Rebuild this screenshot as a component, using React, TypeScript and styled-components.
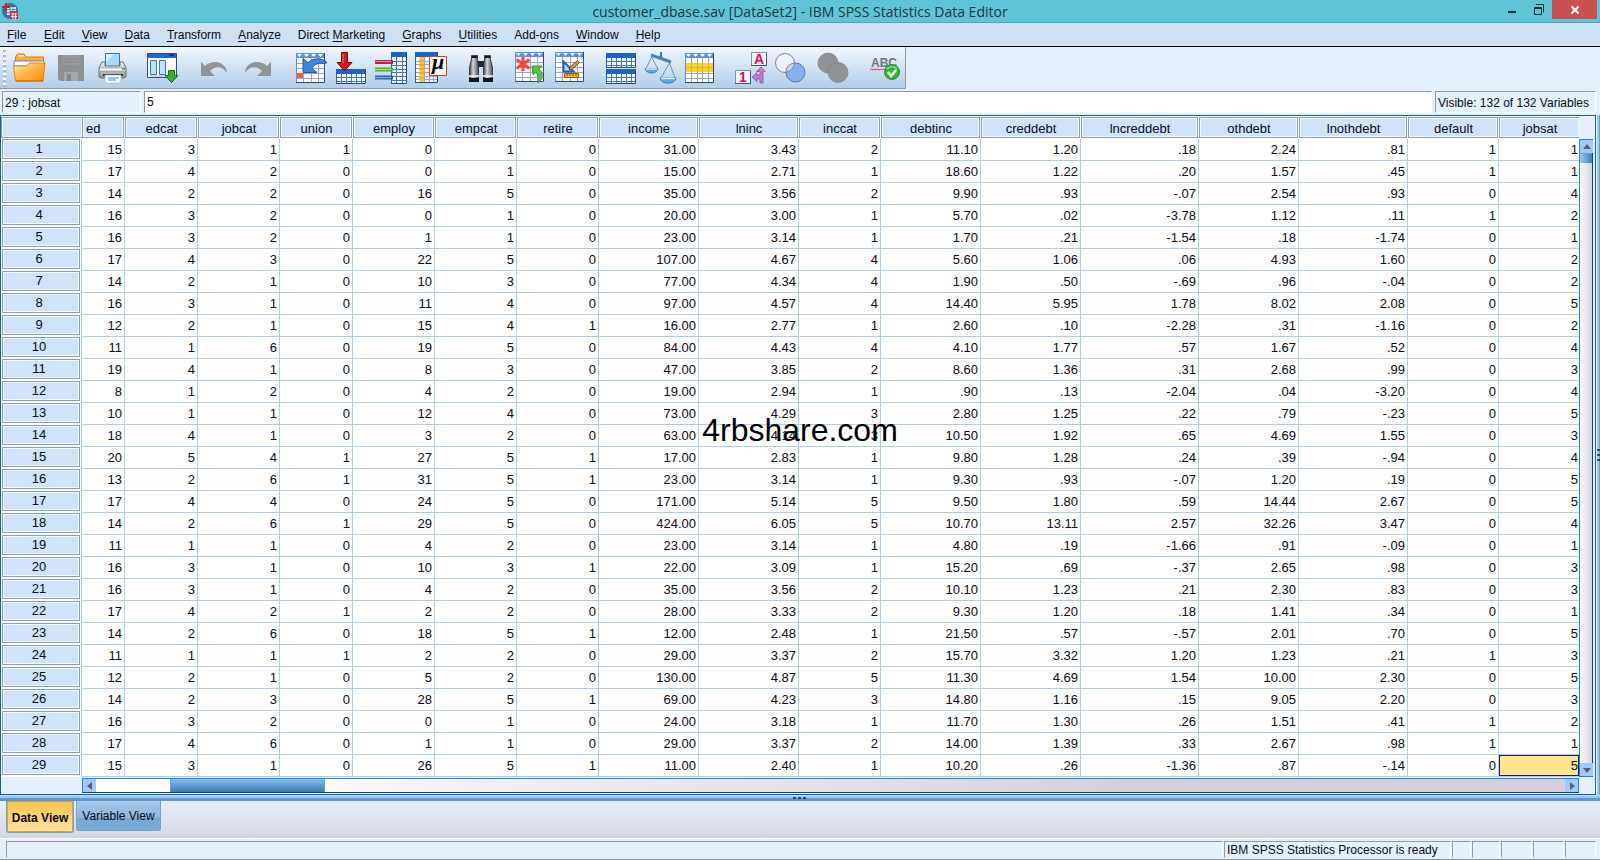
import React, { useState } from "react";
import styled, { createGlobalStyle, css } from "styled-components";

const Global = createGlobalStyle`
  * { box-sizing: border-box; }
  body {
    margin: 0;
    background: #e4f0fc;
    color: #0a0a14;
    font-family: "Liberation Sans", Arial, sans-serif;
    font-size: 12px;
    line-height: 16px;
  }
  button, input { font: inherit; color: inherit; }
`;

const Window = styled.div`
  display: flex;
  flex-direction: column;
  min-height: 100vh;
  overflow: hidden;
`;

/* ---------- title bar ---------- */

const TitleBar = styled.header`
  display: grid;
  grid-template-columns: 1fr auto 1fr;
  height: 23px;
  background: #60c4d7;
  border-bottom: 1px solid #4aa9b9;
`;

const AppLogo = styled.svg`
  margin: 3px 2px;
`;

const Title = styled.h1`
  margin: 0;
  font: 400 14px/24px "Open Sans", "Noto Sans", sans-serif;
  color: #1d363c;
`;

const Controls = styled.div`
  display: flex;
  justify-content: flex-end;
  padding-right: 3px;
`;

const ControlButton = styled.button<{ $close?: boolean }>`
  width: ${(p) => (p.$close ? 45 : 26)}px;
  height: 19px;
  padding: 0;
  border: 0;
  display: flex;
  align-items: center;
  justify-content: center;
  background: ${(p) => (p.$close ? "#c75050" : "transparent")};
`;

/* ---------- menu ---------- */

const MenuBar = styled.nav`
  display: flex;
  height: 24px;
  background: #cee1f2;
  border-bottom: 1px solid #000;
`;

const MenuButton = styled.button`
  min-width: 37px;
  padding: 1px 10px 0 7px;
  border: 0;
  background: none;
  line-height: 22px;
  text-align: left;
  white-space: nowrap;
  u { text-underline-offset: 2px; }
`;

/* ---------- tool bar ---------- */

const ToolRow = styled.div`
  display: flex;
  height: 44px;
  background: #e4f0fc;
`;

const ToolBar = styled.div`
  display: flex;
  gap: 11px;
  height: 42px;
  padding: 0 1px 0 3px;
  background: linear-gradient(#f2f7fd, #dbe8f6 35%, #b2cee9);
  border-right: 1px solid #929aa4;
  border-bottom: 1px solid #929aa4;
`;

const Grip = styled.div`
  width: 3px;
  margin: 1px -9px 1px 0;
  background: repeating-linear-gradient(#fff 0 2px, #a9b7c6 2px 4px, transparent 4px 5px);
`;

const ToolGroup = styled.div<{ $gap?: number }>`
  display: flex;
  gap: ${(p) => p.$gap ?? 0}px;
`;

const ToolButton = styled.button`
  width: 40px;
  height: 40px;
  padding: 0;
  border: 0;
  background: none;
  svg { display: block; }
`;

/* ---------- cell editor ---------- */

const EditorRow = styled.div`
  display: flex;
  gap: 3px;
  height: 24px;
  padding: 0 4px 2px 2px;
`;

const sunken = css`
  border: 1px solid;
  border-color: #929aa4 #fff #fff #929aa4;
`;

const CellName = styled.label`
  ${sunken}
  width: 139px;
  padding-left: 2px;
  line-height: 22px;
`;

const CellInput = styled.input`
  ${sunken}
  flex: 1;
  min-width: 0;
  padding: 0 2px;
  background: #fff;
  outline: 0;
`;

const VisibleInfo = styled.output`
  ${sunken}
  width: 161px;
  padding-left: 2px;
  line-height: 22px;
  white-space: nowrap;
`;

/* ---------- data grid ---------- */

const Workspace = styled.main`
  display: flex;
  flex: 1;
`;

const DataPane = styled.section`
  position: relative;
  display: grid;
  grid-template-columns: minmax(0, 1fr) 15px;
  grid-template-rows: 1fr 15px;
  flex: 1;
  min-width: 0;
  padding: 0 1px 1px 0;
  border: 1px solid #0b63ac;
`;

const Sheet = styled.table`
  width: 100%;
  height: fit-content;
  table-layout: fixed;
  border-collapse: separate;
  border-spacing: 0;
  font-size: 13px;
  background: #fff;
`;

const HeadCell = styled.th<{ $cut?: boolean; $last?: boolean }>`
  height: 23px;
  padding: 1px ${(p) => (p.$last ? 0 : 1)}px 1px 0;
  font-weight: 400;
  overflow: hidden;
  div {
    height: 21px;
    padding-left: ${(p) => (p.$cut ? 3 : 1)}px;
    border: 1px solid #8d9db2;
    border-right-width: ${(p) => (p.$last ? 0 : 1)}px;
    box-shadow: inset 0 0 0 1px #f2f8ff;
    background: #cfe3fc;
    line-height: 21px;
    text-align: ${(p) => (p.$cut ? "left" : "center")};
  }
`;

const RowHead = styled.th`
  height: 22px;
  padding: 0 1px 2px;
  font-weight: 400;
  border-right: 1px solid #b0cdec;
  div {
    height: 20px;
    padding-right: 4px;
    border: 1px solid #8d9db2;
    box-shadow: inset 0 0 0 1px #f2f8ff;
    background: #cfe3fc;
    line-height: 18px;
    text-align: center;
  }
`;

const Cell = styled.td<{ $selected?: boolean }>`
  height: 22px;
  padding: 0 2px 0 0;
  border-right: 1px solid #b0cdec;
  border-bottom: 1px solid #b0cdec;
  line-height: 20px;
  text-align: right;
  &:last-child { border-right: 0; padding-right: 1px; }
  ${(p) =>
    p.$selected &&
    css`
      background: #ffe48c;
      box-shadow: inset 0 0 0 1px #10109a;
    `}
`;

const Watermark = styled.p`
  position: absolute;
  left: 4px;
  right: 0;
  top: 296px;
  margin: 0;
  font-size: 32px;
  line-height: 36px;
  text-align: center;
  color: #000;
  pointer-events: none;
`;

/* ---------- scroll bars ---------- */

const VScroll = styled.div`
  display: flex;
  flex-direction: column;
  margin: 23px 1px 1px 0;
  border: 1px solid #1e8ae6;
  border-right-color: #0d4674;
  background: linear-gradient(90deg, #fbfbfc, #d3d3de);
`;

const HScroll = styled.div`
  display: flex;
  margin-left: 81px;
  border: 1px solid #1e8ae6;
  border-bottom: 1px solid #0d4674;
  background: linear-gradient(90deg, #ffffff 10%, #f2f2f4 25%, #d3d0dc 70%);
`;

const ScrollArrow = styled.button`
  flex: none;
  display: flex;
  align-items: center;
  justify-content: center;
  width: 13px;
  height: 13px;
  padding: 0;
  border: 0;
  background: #9fcbfb;
`;

const Thumb = styled.div<{ $vertical?: boolean }>`
  flex: none;
  ${(p) =>
    p.$vertical
      ? css`
          height: 10px;
          border-top: 1px solid #58a6ee;
          background: linear-gradient(90deg, #9cc6ec, #3b82bd);
        `
      : css`
          width: 155px;
          margin-left: 74px;
          background: linear-gradient(#8fbde6, #347ab6);
          border: solid #58a6ee;
          border-width: 0 1px;
        `}
`;

const Track = styled.div`
  flex: 1;
`;

const SideSplitter = styled.div`
  display: flex;
  align-items: center;
  width: 4px;
  border-left: 1px solid #fff;
  background: linear-gradient(90deg, #97cbf8 2px, #6a9fd2 2px);
`;

const BottomSplitter = styled.div`
  display: flex;
  justify-content: center;
  height: 6px;
  background: linear-gradient(#b4dcfa 1px, #97cbf8 1px 3px, #6496c8 3px);
`;

/* ---------- view tabs and status bar ---------- */

const ViewTabs = styled.div`
  display: flex;
  align-items: flex-start;
  gap: 2px;
  height: 37px;
  padding-left: 6px;
  background: linear-gradient(#e4eefa, #d6d6e2);
`;

const ViewTab = styled.button<{ $active: boolean }>`
  border: 1px solid #6ba3d3;
  border-top: 0;
  border-radius: 0 0 3px 3px;
  ${(p) =>
    p.$active
      ? css`
          width: 68px;
          height: 32px;
          padding: 2px 0 0;
          font-weight: 700;
          background: linear-gradient(#fbc24a, #fde3a2);
          box-shadow: inset 0 0 0 1px #d8a23e;
        `
      : css`
          width: 85px;
          height: 30px;
          padding: 0;
          background: linear-gradient(#a5c8e9, #8ab6de 60%, #74a8d6 60%, #7aacd8);
        `}
`;

const StatusBar = styled.footer`
  display: flex;
  gap: 1px;
  height: 22px;
  padding: 2px 4px 1px 6px;
  border-top: 1px solid #fff;
  border-bottom: 1px solid #929aa4;
`;

const StatusField = styled.div<{ $width?: number }>`
  border: 1px solid;
  border-color: #929aa4 #fff transparent #929aa4;
  padding-left: 2px;
  line-height: 17px;
  white-space: nowrap;
  ${(p) => (p.$width ? `width: ${p.$width}px;` : "flex: 1;")}
`;

/* ---------- icons ---------- */

type GridProps = { x: number; y: number; w: number; h: number; cols: number; rows: number; head?: string; line?: string; headH?: number };

/* A small spreadsheet with a coloured header strip. */
function Grid({ x, y, w, h, cols, rows, head = "#5b8fe8", line = "#9ba6b8", headH = 5 }: GridProps) {
  const bodyH = h - headH;
  const parts: React.ReactNode[] = [];
  for (let i = 1; i < cols; i++) {
    const cx = Math.round(x + (w * i) / cols) + 0.5;
    parts.push(<path key={"c" + i} d={`M${cx} ${y + headH}V${y + h}`} />);
  }
  for (let i = 1; i < rows; i++) {
    const cy = Math.round(y + headH + (bodyH * i) / rows) + 0.5;
    parts.push(<path key={"r" + i} d={`M${x} ${cy}H${x + w}`} />);
  }
  return (
    <g>
      <rect x={x} y={y} width={w} height={h} fill="#fafbfe" />
      <g stroke={line} strokeWidth="1">{parts}</g>
      <rect x={x} y={y} width={w} height={headH} fill={head} />
      <path d={`M${x + 0.5} ${y + h - 0.5}V${y + 0.5}`} stroke={head} />
      <path d={`M${x} ${y + h - 0.5}H${x + w - 0.5}V${y}`} stroke="#31486f" fill="none" />
    </g>
  );
}

function HeadArrows({ x, y }: { x: number; y: number }) {
  return (
    <g fill="#fff">
      {[0, 7, 14, 21].map((d) => (
        <path key={d} d={`M${x + d + 2} ${y + 1}h5l-2.5 3z`} />
      ))}
    </g>
  );
}

function Icon({ children }: { children: React.ReactNode }) {
  return (
    <svg width="40" height="40" viewBox="0 0 40 40" fill="none" aria-hidden="true">
      {children}
    </svg>
  );
}

const OpenIcon = () => (
  <Icon>
    <defs>
      <linearGradient id="fo" x1="0" y1="0" x2="1" y2="1">
        <stop offset="0" stopColor="#fff0b8" /><stop offset=".45" stopColor="#ffb648" /><stop offset="1" stopColor="#f58a12" />
      </linearGradient>
    </defs>
    <path d="M7.500 31V10l2-3H16l2 3h17.500v21z" fill="#fbb12d" stroke="#d77f0a" />
    <path d="M9 9.500l1-1.500h5.500l1 1.500z" fill="#fff0b8" />
    <path d="M6 14h30v5H6z" fill="#f4f9ff" stroke="#3f7fd0" strokeWidth=".8" />
    <path d="M5.500 19h13l3-3h15.500l-2 18H7.500z" fill="url(#fo)" stroke="#e08312" />
    <path d="M8 34h27" stroke="#c66a00" />
  </Icon>
);

const SaveIcon = () => (
  <Icon>
    <path d="M8 8h26v26H10l-2-2z" fill="#8f9092" />
    <path d="M13 8h16v10H13z" fill="#989a9d" /><path d="M14 12h14M14 15h14" stroke="#85878a" />
    <path d="M14 25h14v9H14z" fill="#a6a9ac" /><path d="M17 27h4v7h-4z" fill="#85878a" />
  </Icon>
);

const PrintIcon = () => (
  <Icon>
    <defs>
      <linearGradient id="pr" x1="0" y1="0" x2="0" y2="1">
        <stop offset="0" stopColor="#f5f6f7" /><stop offset="1" stopColor="#8b9096" />
      </linearGradient>
    </defs>
    <path d="M13.500 6.500h14v13h-14z" fill="#a8dafc" stroke="#2b79c2" />
    <path d="M14 7h8l-8 8z" fill="#dff2ff" />
    <path d="M10 15h3v4h15v-4h3l3 6v9l-2 1H9l-2-1v-9z" fill="url(#pr)" stroke="#6c7177" />
    <path d="M7.500 21h26v3h-26z" fill="#f7f8f9" stroke="#85898f" strokeWidth=".6" />
    <path d="M30 21h3v2h-3z" fill="#32d044" />
    <path d="M11 28h20" stroke="#33373d" strokeWidth="2" />
    <path d="M13 28h16v8H13z" fill="#fff" stroke="#a3afbd" strokeWidth=".7" />
    <path d="M16 31h11M16 33h8" stroke="#4785c8" />
  </Icon>
);

const RecallIcon = () => (
  <Icon>
    <path d="M4.500 6.500h29v24h-29z" fill="#fff" stroke="#2c4b91" />
    <path d="M5 7h28v4H5z" fill="#2168cf" /><path d="M26 8h5" stroke="#15377c" strokeWidth="2" />
    <path d="M7.500 13.500h6v14h-6zM16.500 13.500h6v14h-6z" fill="#bfe2fb" stroke="#2b78cc" />
    <path d="M7 29h15" stroke="#8cb0e0" />
    <path d="M25.500 23.500h6v5h3.500l-6.500 7-6.500-7h3.500z" fill="#37b02a" stroke="#15730f" />
  </Icon>
);

const curl = "M7 15l4 4c6-6 19-6 22 5l-1 1c-4-6-11-6-16-1l5 5H7z";
const UndoIcon = () => <Icon><path d={curl} fill="#929497" /></Icon>;
const RedoIcon = () => <Icon><g transform="translate(40 0) scale(-1 1)"><path d={curl} fill="#929497" /></g></Icon>;

const GotoCaseIcon = () => (
  <Icon>
    <Grid x={7} y={6} w={29} h={30} cols={4} rows={5} />
    <HeadArrows x={6} y={6} />
    <path d="M8 26h6v5H8z" fill="#fb5548" />
    <path d="M14 11.500v14h14l-5-4c2-5 8-6 13-5l2-1c-5-5-13-5-19 0z" fill="#3d86df" stroke="#1b4fa8" strokeWidth=".9" />
  </Icon>
);

const GotoVariableIcon = () => (
  <Icon>
    <Grid x={7} y={22} w={30} h={15} cols={6} rows={3} head="#1d63c9" line="#3f76c8" />
    <path d="M12.500 5.500h6v10h4.500l-7.500 8.500-7.500-8.500h4.500z" fill="#cf1c1c" stroke="#7d0a0a" />
    <path d="M14 7v9" stroke="#f07a70" />
  </Icon>
);

const VariablesIcon = () => (
  <Icon>
    <Grid x={22} y={5} w={16} h={32} cols={3} rows={7} head="#1d63c9" line="#3f76c8" />
    <path d="M6 15h18" stroke="#c21f50" strokeWidth="4" /><path d="M6 14.500h16" stroke="#ef7f9d" />
    <path d="M6 22.500h18" stroke="#45b52d" strokeWidth="4" /><path d="M6 22.500h16" stroke="#a5f07c" />
    <path d="M6 30.500h18" stroke="#2f5fc4" strokeWidth="4" /><path d="M6 30.500h16" stroke="#87aef2" />
  </Icon>
);

const StatsIcon = () => (
  <Icon>
    <Grid x={6} y={5} w={23} h={31} cols={5} rows={7} head="#1d63c9" />
    <path d="M10.500 10h4.500v25h-4.500z" fill="#fcc443" />
    <path d="M10 14h5M10 18h5M10 22h5M10 26h5M10 31h5" stroke="#d8942a" />
    <path d="M20.500 9.500h17v19h-17z" fill="#fff" stroke="#ef3a17" />
    <text x="23" y="22" fontFamily="Liberation Serif, serif" fontSize="22" fontWeight="700" fontStyle="italic" fill="#000">μ</text>
  </Icon>
);

const FindIcon = () => (
  <Icon>
    <defs>
      <linearGradient id="bi">
        <stop offset="0" stopColor="#3e4248" /><stop offset=".4" stopColor="#d4d8dd" /><stop offset="1" stopColor="#4c5057" />
      </linearGradient>
    </defs>
    <path d="M17 14h7v6h-7z" fill="#24262a" />
    <path d="M11.500 8.500h6v4l1 7v15h-9V20l2-8z" fill="url(#bi)" stroke="#222428" strokeWidth=".8" />
    <path d="M24.500 8.500h6v4l2 8v14h-9v-15l1-7z" fill="url(#bi)" stroke="#222428" strokeWidth=".8" />
    <path d="M9 29h10M23 29h10" stroke="#f4f5f7" strokeWidth="1.500" />
    <path d="M9 31h10v4H9zM23 31h10v4H23z" fill="#131416" />
    <path d="M12 10h5M25 10h5" stroke="#16181b" strokeWidth="2" />
  </Icon>
);

const InsertCaseIcon = () => (
  <Icon>
    <Grid x={4} y={5} w={29} h={30} cols={4} rows={5} />
    <HeadArrows x={3} y={5} />
    <path d="M12 10v14M5.500 12.500l13 9M5.500 21.500l13-9" stroke="#f8463c" strokeWidth="3" />
    <path d="M21 19h10l-3 3c5 4 4 10-1 14 1-5 0-8-2-11l-3 3z" fill="#58c33d" stroke="#2f8f1c" strokeWidth=".8" />
  </Icon>
);

const InsertVariableIcon = () => (
  <Icon>
    <Grid x={4} y={5} w={29} h={30} cols={4} rows={5} />
    <HeadArrows x={3} y={5} />
    <path d="M12.500 14.500l10 10h-10z" fill="#b9dbfb" stroke="#1f5fc0" strokeWidth="2" />
    <path d="M18 23l1.500-3.500 7-6 2 2-7 6.500z" fill="#d9933a" stroke="#553311" strokeWidth=".8" />
    <path d="M13.500 26.500h14v4h-14z" fill="#f7b62d" stroke="#9a5608" />
    <path d="M16 27v2M19 27v2M22 27v2M25 27v2" stroke="#7c4506" />
  </Icon>
);

const SplitIcon = () => (
  <Icon>
    <Grid x={4} y={6} w={30} h={15} cols={6} rows={3} head="#1d63c9" line="#3f76c8" />
    <Grid x={4} y={22} w={30} h={15} cols={6} rows={3} head="#1d63c9" line="#3f76c8" />
  </Icon>
);

const WeightIcon = () => (
  <Icon>
    <path d="M19 5v6" stroke="#39719f" strokeWidth="2" />
    <path d="M9 8l20 7" stroke="#4685b3" strokeWidth="3" />
    <path d="M9.500 10L4 22M9.500 10L16 22M27.500 16L19 31M27.500 16L33 31" stroke="#6b93b4" />
    <path d="M3 21.500h13c-1 6-12 6-13 0zM18 31h16c-1 7-15 7-16 0z" fill="#5aa9dd" stroke="#34759f" strokeWidth=".8" />
    <path d="M4 22h11M19 31.500h14" stroke="#d5eefb" strokeWidth="1.500" />
  </Icon>
);

const SelectIcon = () => (
  <Icon>
    <Grid x={3} y={6} w={29} h={30} cols={5} rows={5} />
    <HeadArrows x={2} y={6} />
    <path d="M4 16h27v9H4z" fill="#f9d22d" />
    <path d="M4 20.500h27M9.500 16v9M15.500 16v9M20.500 16v9M26.500 16v9" stroke="#e0b527" />
  </Icon>
);

const ValueLabelsIcon = () => (
  <Icon>
    <path d="M18.500 5.500h15v13h-15zM2.500 23.500h15v13h-15z" fill="#f4f7fb" stroke="#7d94ad" />
    <path d="M18 18.500h15.500V6M2 36.500h15.500V24" stroke="#3c5878" />
    <g fontFamily="Liberation Sans, sans-serif" fontWeight="700" fontSize="14" fill="#dc0d50" textAnchor="middle">
      <text x="26" y="17">A</text>
      <text x="10" y="35">1</text>
    </g>
    <path d="M28 20l4.500 4.500H30V36h-3v-4h-3v2.500L19 30l5-4.500V28h3v-3.500h-3.500z" fill="#c07bcf" stroke="#8d4fa0" strokeWidth=".8" />
  </Icon>
);

const UseSetsIcon = () => (
  <Icon>
    <circle cx="12" cy="16" r="9.500" fill="#f1f5fb" fillOpacity=".8" stroke="#7d848e" />
    <circle cx="22.500" cy="25.500" r="9.500" fill="#78a9f2" fillOpacity=".85" stroke="#5873a8" />
    <path d="M13 25a9.500 9.500 0 0 1 8.500-9A9.500 9.500 0 0 1 13 25z" fill="#c4d7ee" stroke="#76808e" strokeWidth=".8" />
  </Icon>
);

const ShowAllIcon = () => (
  <Icon>
    <g fill="#909296" stroke="#85878b" strokeWidth=".8">
      <circle cx="15" cy="16" r="10" />
      <circle cx="25" cy="25.500" r="10" />
    </g>
    <path d="M15 25a9.500 9.500 0 0 1 10-9.500" stroke="#84868a" />
  </Icon>
);

const SpellIcon = () => (
  <Icon>
    <text x="7" y="20" fontFamily="Liberation Sans, sans-serif" fontWeight="700" fontSize="12" fill="#70757c">ABC</text>
    <path d="M6 23l1.500-1 1.500 1 1.500-1 1.500 1 1.500-1 1.500 1 1.500-1 1.500 1 1.500-1 1.500 1" stroke="#e03b24" />
    <circle cx="28" cy="25" r="7.500" fill="#35b235" stroke="#2a8d2c" />
    <path d="M23 22a6 5 0 0 1 10 0" stroke="#8fe08b" strokeWidth="1.500" />
    <path d="M24 25l3 4 5-6" stroke="#fff" strokeWidth="2.500" />
  </Icon>
);

type Tool = [string, () => React.ReactElement];
const toolGroups: { gap?: number; tools: Tool[] }[] = [
  { gap: 2, tools: [["Open", OpenIcon], ["Save", SaveIcon], ["Print", PrintIcon]] },
  { tools: [["Recall dialogs", RecallIcon]] },
  { gap: 4, tools: [["Undo", UndoIcon], ["Redo", RedoIcon]] },
  { tools: [["Go to case", GotoCaseIcon], ["Go to variable", GotoVariableIcon], ["Variables", VariablesIcon], ["Run statistics", StatsIcon]] },
  { tools: [["Find", FindIcon]] },
  { tools: [["Insert cases", InsertCaseIcon], ["Insert variable", InsertVariableIcon]] },
  { tools: [["Split file", SplitIcon], ["Weight cases", WeightIcon], ["Select cases", SelectIcon]] },
  { tools: [["Value labels", ValueLabelsIcon], ["Use variable sets", UseSetsIcon], ["Show all variables", ShowAllIcon]] },
  { tools: [["Spell check", SpellIcon]] },
];

/* "_" precedes the mnemonic letter. */
const menus = ["_File", "_Edit", "_View", "_Data", "_Transform", "_Analyze", "Direct _Marketing", "_Graphs", "_Utilities", "Add-_ons", "_Window", "_Help"];

const columns: [string, number | undefined][] = [
  ["ed", 43], ["edcat", 73], ["jobcat", 82], ["union", 73], ["employ", 82], ["empcat", 82], ["retire", 82],
  ["income", 100], ["lninc", 100], ["inccat", 82], ["debtinc", 100], ["creddebt", 100], ["lncreddebt", 118],
  ["othdebt", 100], ["lnothdebt", 109], ["default", 91], ["jobsat", undefined],
];

const data = `15 3 1 1 0 1 0 31.00 3.43 2 11.10 1.20 .18 2.24 .81 1 1
17 4 2 0 0 1 0 15.00 2.71 1 18.60 1.22 .20 1.57 .45 1 1
14 2 2 0 16 5 0 35.00 3.56 2 9.90 .93 -.07 2.54 .93 0 4
16 3 2 0 0 1 0 20.00 3.00 1 5.70 .02 -3.78 1.12 .11 1 2
16 3 2 0 1 1 0 23.00 3.14 1 1.70 .21 -1.54 .18 -1.74 0 1
17 4 3 0 22 5 0 107.00 4.67 4 5.60 1.06 .06 4.93 1.60 0 2
14 2 1 0 10 3 0 77.00 4.34 4 1.90 .50 -.69 .96 -.04 0 2
16 3 1 0 11 4 0 97.00 4.57 4 14.40 5.95 1.78 8.02 2.08 0 5
12 2 1 0 15 4 1 16.00 2.77 1 2.60 .10 -2.28 .31 -1.16 0 2
11 1 6 0 19 5 0 84.00 4.43 4 4.10 1.77 .57 1.67 .52 0 4
19 4 1 0 8 3 0 47.00 3.85 2 8.60 1.36 .31 2.68 .99 0 3
8 1 2 0 4 2 0 19.00 2.94 1 .90 .13 -2.04 .04 -3.20 0 4
10 1 1 0 12 4 0 73.00 4.29 3 2.80 1.25 .22 .79 -.23 0 5
18 4 1 0 3 2 0 63.00 4.14 3 10.50 1.92 .65 4.69 1.55 0 3
20 5 4 1 27 5 1 17.00 2.83 1 9.80 1.28 .24 .39 -.94 0 4
13 2 6 1 31 5 1 23.00 3.14 1 9.30 .93 -.07 1.20 .19 0 5
17 4 4 0 24 5 0 171.00 5.14 5 9.50 1.80 .59 14.44 2.67 0 5
14 2 6 1 29 5 0 424.00 6.05 5 10.70 13.11 2.57 32.26 3.47 0 4
11 1 1 0 4 2 0 23.00 3.14 1 4.80 .19 -1.66 .91 -.09 0 1
16 3 1 0 10 3 1 22.00 3.09 1 15.20 .69 -.37 2.65 .98 0 3
16 3 1 0 4 2 0 35.00 3.56 2 10.10 1.23 .21 2.30 .83 0 3
17 4 2 1 2 2 0 28.00 3.33 2 9.30 1.20 .18 1.41 .34 0 1
14 2 6 0 18 5 1 12.00 2.48 1 21.50 .57 -.57 2.01 .70 0 5
11 1 1 1 2 2 0 29.00 3.37 2 15.70 3.32 1.20 1.23 .21 1 3
12 2 1 0 5 2 0 130.00 4.87 5 11.30 4.69 1.54 10.00 2.30 0 5
14 2 3 0 28 5 1 69.00 4.23 3 14.80 1.16 .15 9.05 2.20 0 3
16 3 2 0 0 1 0 24.00 3.18 1 11.70 1.30 .26 1.51 .41 1 2
17 4 6 0 1 1 0 29.00 3.37 2 14.00 1.39 .33 2.67 .98 1 1
15 3 1 0 26 5 1 11.00 2.40 1 10.20 .26 -1.36 .87 -.14 0 5`
  .split("\n")
  .map((row) => row.split(" "));

function MenuLabel({ text }: { text: string }) {
  const [before, after] = text.split("_");
  return <>{before}<u>{after[0]}</u>{after.slice(1)}</>;
}

const arrowPaths = { up: "M0 6h8L4 1z", down: "M0 2h8L4 7z", left: "M6 0v8L1 4z", right: "M2 0v8l5-4z" };

function Arrow({ dir }: { dir: keyof typeof arrowPaths }) {
  return (
    <ScrollArrow aria-label={`Scroll ${dir}`}>
      <svg width="8" height="8"><path d={arrowPaths[dir]} fill="#59606a" /></svg>
    </ScrollArrow>
  );
}

export default function App() {
  const [value, setValue] = useState("5");
  const [view, setView] = useState("Data View");

  return (
    <Window>
      <Global />
      <TitleBar>
        <AppLogo width="16" height="16" viewBox="0 0 16 16" aria-hidden="true">
          <circle cx="8" cy="8" r="8" fill="#3c6fae" />
          <path d="M5 4h9v8H5z" fill="#dceafa" />
          <path d="M5 6.500h9M5 9.500h9M8 4v8M11 4v8" stroke="#5f8fc9" />
          <path d="M4 0v8M0 4h8" stroke="#d81a2c" strokeWidth="2" />
          <path d="M8 8h8v8H8z" fill="#c9354a" />
          <path d="M9 11h6M9 13.500h6M11 10v6M13.500 10v6" stroke="#fbe3e6" />
        </AppLogo>
        <Title>customer_dbase.sav [DataSet2] - IBM SPSS Statistics Data Editor</Title>
        <Controls>
          <ControlButton aria-label="Minimize">
            <svg width="12" height="12"><path d="M1 8h8" stroke="#1c2b2f" strokeWidth="2" /></svg>
          </ControlButton>
          <ControlButton aria-label="Restore">
            <svg width="12" height="12" fill="none" stroke="#1c2b2f">
              <path d="M1.500 3.500h7v7h-7zM1 4.500h8M3 0.500h7.500v8" />
            </svg>
          </ControlButton>
          <ControlButton aria-label="Close" $close>
            <svg width="10" height="10"><path d="M1.500 1.500l7 7M8.500 1.500l-7 7" stroke="#fff" strokeWidth="2" /></svg>
          </ControlButton>
        </Controls>
      </TitleBar>

      <MenuBar>
        {menus.map((m) => (
          <MenuButton key={m}><MenuLabel text={m} /></MenuButton>
        ))}
      </MenuBar>

      <ToolRow>
        <ToolBar role="toolbar">
          <Grip />
          {toolGroups.map((g, i) => (
            <ToolGroup key={i} $gap={g.gap}>
              {g.tools.map(([name, Glyph]) => (
                <ToolButton key={name} aria-label={name}><Glyph /></ToolButton>
              ))}
            </ToolGroup>
          ))}
        </ToolBar>
      </ToolRow>

      <EditorRow>
        <CellName htmlFor="cell-value">29 : jobsat</CellName>
        <CellInput id="cell-value" value={value} onChange={(e) => setValue(e.target.value)} />
        <VisibleInfo>Visible: 132 of 132 Variables</VisibleInfo>
      </EditorRow>

      <Workspace>
        <DataPane>
          <Sheet>
            <colgroup>
              <col width={81} />
              {columns.map(([name, width]) => <col key={name} width={width} />)}
            </colgroup>
            <thead>
              <tr>
                <HeadCell $last><div /></HeadCell>
                {columns.map(([name], i) => (
                  <HeadCell key={name} scope="col" $cut={i === 0} $last={i === columns.length - 1}>
                    <div>{name}</div>
                  </HeadCell>
                ))}
              </tr>
            </thead>
            <tbody>
              {data.map((row, r) => (
                <tr key={r}>
                  <RowHead scope="row"><div>{r + 1}</div></RowHead>
                  {row.map((v, c) => {
                    const selected = r === 28 && c === 16;
                    return <Cell key={c} $selected={selected}>{selected ? value : v}</Cell>;
                  })}
                </tr>
              ))}
            </tbody>
          </Sheet>
          <VScroll>
            <Arrow dir="up" />
            <Thumb $vertical />
            <Track />
            <Arrow dir="down" />
          </VScroll>
          <HScroll>
            <Arrow dir="left" />
            <Thumb />
            <Track />
            <Arrow dir="right" />
          </HScroll>
          <Watermark>4rbshare.com</Watermark>
        </DataPane>
        <SideSplitter>
          <svg width="4" height="14" fill="#1c4a80"><path d="M0 1h3v2H0zM0 6h3v2H0zM0 11h3v2H0z" /></svg>
        </SideSplitter>
      </Workspace>

      <BottomSplitter>
        <svg width="14" height="6" fill="#1c4a80"><path d="M0 2h3v2H0zM5 2h3v2H5zM10 2h3v2h-3z" /></svg>
      </BottomSplitter>

      <ViewTabs role="tablist">
        {["Data View", "Variable View"].map((name) => (
          <ViewTab key={name} role="tab" aria-selected={view === name} $active={view === name} onClick={() => setView(name)}>
            {name}
          </ViewTab>
        ))}
      </ViewTabs>

      <StatusBar>
        <StatusField />
        <StatusField $width={227}>IBM SPSS Statistics Processor is ready</StatusField>
        <StatusField $width={19} />
        <StatusField $width={28} />
        <StatusField $width={31} />
        <StatusField $width={31} />
        <StatusField $width={31} />
      </StatusBar>
    </Window>
  );
}
